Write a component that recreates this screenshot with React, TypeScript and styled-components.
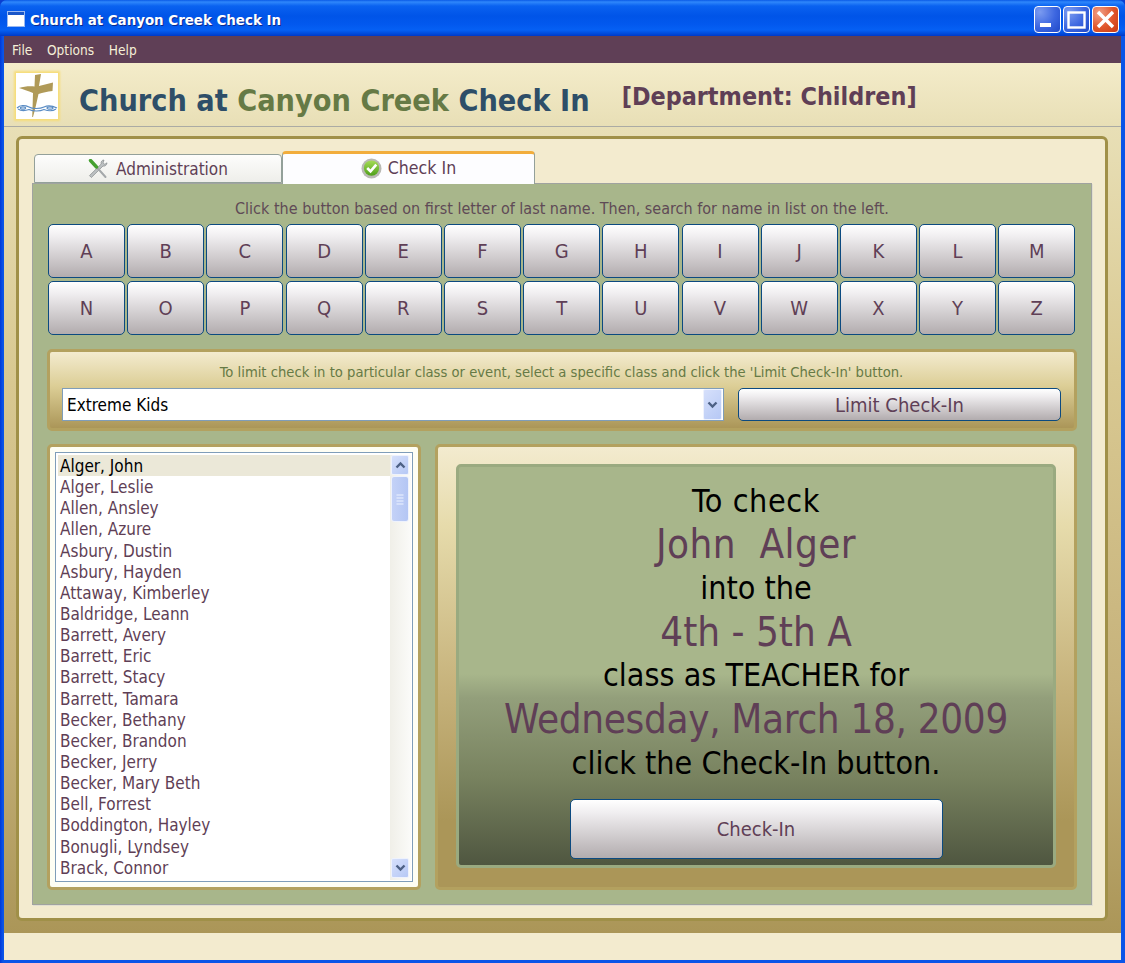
import React from "react";
import styled, { createGlobalStyle } from "styled-components";

const FONT = `"DejaVu Sans Condensed", "DejaVu Sans", "Noto Sans", sans-serif`;

const Global = createGlobalStyle`
  html, body { margin: 0; padding: 0; width: 1125px; height: 963px; overflow: hidden; background: #0a3fd0; }
  * { box-sizing: border-box; }
  #root { width: 1125px; height: 963px; }
`;

const Window = styled.div`
  width: 1125px;
  height: 963px;
  display: flex;
  flex-direction: column;
  font-family: ${FONT};
  background: linear-gradient(90deg, #0038d8 0, #0a55e8 3px);
  border-radius: 7px 7px 0 0;
  overflow: hidden;
`;
const TitleBar = styled.div`
  height: 36px;
  flex: none;
  display: flex;
  align-items: center;
  padding: 2px 6px 0 7px;
  gap: 5px;
  background: linear-gradient(180deg, #0a5ae6 0, #2f87fb 2px, #0a62f0 6px, #0054e8 16px, #0258ee 24px, #0560f4 30px, #0048d8 34px, #0038c8 36px);
`;
const TitleText = styled.span`
  flex: 1;
  margin-top: 2px;
  color: #fff;
  font-size: 14.9px;
  font-weight: 700;
  text-shadow: 1px 1px 0 #0a2a90;
`;
const CaptionButtons = styled.div`
  display: flex;
  gap: 2px;
`;
const CaptionButton = styled.div<{ $close?: boolean }>`
  width: 27px;
  height: 27px;
  border: 1px solid #fff;
  border-radius: 4px;
  background: ${(p) =>
    p.$close
      ? "radial-gradient(circle at 25% 25%, #f0a088, #e0552a 55%, #c93a12)"
      : "radial-gradient(circle at 20% 20%, #7b9bf0, #3c66e0 55%, #1f48c8)"};
  display: flex;
  align-items: center;
  justify-content: center;
`;
const Body = styled.div`
  flex: 1;
  margin: 0 4px 3px;
  display: flex;
  flex-direction: column;
  min-height: 0;
`;
const MenuBar = styled.div`
  height: 27px;
  flex: none;
  background: #5f3f56;
  display: flex;
  align-items: center;
  gap: 14.6px;
  padding-left: 8px;
  color: #f5efd8;
  font-size: 13.6px;
`;
const Header = styled.div`
  height: 64px;
  flex: none;
  display: flex;
  align-items: flex-start;
  background: linear-gradient(180deg, #f4ecca, #e8dfb6);
  border-bottom: 1px solid #ababa4;
  padding: 10px 0 0 12px;
`;
const Logo = styled.div`
  width: 42px;
  height: 46px;
  background: #fff;
  box-shadow: 0 0 2px 2px #f6dd7a;
  flex: none;
  display: flex;
`;
const HeaderTitle = styled.div`
  margin: 10px 0 0 21px;
  font-size: 30.3px;
  font-weight: 700;
  line-height: 36px;
  color: #2e4e68;
  white-space: pre;
`;
const Green = styled.span`
  color: #667a45;
`;
const Department = styled.div`
  margin: 8px 0 0 32px;
  font-size: 24.9px;
  font-weight: 700;
  line-height: 32px;
  color: #5f3f56;
`;
const Content = styled.div`
  flex: 1;
  display: flex;
  flex-direction: column;
  min-height: 0;
  padding: 9px 13px 12px 12px;
  background: linear-gradient(180deg, #e8dfb6 0, #d9c992 30%, #c6b27b 70%, #ab9658 100%);
`;
const Card = styled.div`
  height: 785px;
  flex: none;
  border: 3px solid #a09048;
  border-radius: 6px;
  background: #f3ebcf;
  padding: 14px 13px 13px 13px;
  display: flex;
  flex-direction: column;
`;
const Tabs = styled.div`
  display: flex;
  height: 30px;
  flex: none;
  padding-left: 2px;
  align-items: flex-end;
`;
const Tab = styled.div<{ $active?: boolean }>`
  width: ${(p) => (p.$active ? 253 : 248)}px;
  height: ${(p) => (p.$active ? 33 : 29)}px;
  margin-bottom: ${(p) => (p.$active ? -1 : 0)}px;
  padding-bottom: ${(p) => (p.$active ? 2 : 0)}px;
  position: relative;
  z-index: ${(p) => (p.$active ? 2 : 0)};
  border: 1px solid #93a09a;
  border-bottom: ${(p) => (p.$active ? "none" : "1px solid #93a09a")};
  border-top: ${(p) => (p.$active ? "3px solid #f2ad3c" : "1px solid #93a09a")};
  border-radius: 4px 4px 0 0;
  background: ${(p) => (p.$active ? "#fdfdff" : "linear-gradient(180deg, #fdfdfc, #eeeeea)")};
  display: flex;
  align-items: center;
  justify-content: center;
  gap: ${(p) => (p.$active ? 6 : 8)}px;
  font-size: ${(p) => (p.$active ? 17.6 : 17)}px;
  color: #5f3f56;
`;
const Panel = styled.div`
  flex: 1;
  min-height: 0;
  background: #a8b68b;
  border: 1px solid #a0a3a0;
  box-shadow: 1px 1px 0 #e2dfd0;
  padding: 15px 15px 14px 15px;
  display: flex;
  flex-direction: column;
`;
const Hint = styled.div`
  height: 19px;
  line-height: 19px;
  text-align: center;
  font-size: 16px;
  color: #5f4a56;
  margin-bottom: 6px;
  white-space: nowrap;
`;
const Letters = styled.div`
  display: grid;
  grid-template-columns: repeat(13, 77px);
  grid-auto-rows: 54px;
  column-gap: 2.2px;
  row-gap: 3px;
`;
const Glossy = styled.button`
  font-family: ${FONT};
  color: #5f3f56;
  border: 1px solid #0c4a80;
  border-radius: 5px;
  background: linear-gradient(180deg, #ffffff 0, #f0eef0 22%, #b2acae 100%);
  padding: 0;
`;
const LetterButton = styled(Glossy)`
  font-size: 20px;
`;
const LimitPanel = styled.div`
  height: 82px;
  flex: none;
  margin: 14px -1px 0 -1px;
  border: 3px solid #b3a15f;
  border-radius: 5px;
  background: linear-gradient(180deg, #f3ebcf 0, #dcce96 45%, #ab9658 100%);
  padding: 10px 13px 0 12px;
`;
const LimitHint = styled.div`
  height: 20px;
  line-height: 20px;
  text-align: center;
  font-size: 14.65px;
  color: #667a45;
  margin-bottom: 6px;
  white-space: nowrap;
`;
const LimitRow = styled.div`
  display: flex;
  gap: 14px;
  height: 33px;
`;
const Select = styled.div`
  width: 662px;
  flex: none;
  background: #fff;
  border: 1px solid #7f9db9;
  display: flex;
  align-items: center;
  justify-content: space-between;
  padding: 0 1px 0 4px;
  font-size: 17px;
  color: #000;
`;
const ScrollButton = styled.div<{ $tall?: boolean }>`
  width: ${(p) => (p.$tall ? 19 : 18)}px;
  height: ${(p) => (p.$tall ? "100%" : "20px")};
  flex: none;
  border: 1px solid #eef2fd;
  border-radius: 2px;
  background: linear-gradient(135deg, #d6e0fb, #b6c8f5);
  display: flex;
  align-items: center;
  justify-content: center;
`;
const LimitButton = styled(Glossy)`
  flex: 1;
  font-size: 20px;
`;
const Lower = styled.div`
  flex: none;
  margin: 13px -1px 0 -1px;
  display: flex;
  gap: 14px;
  height: 446px;
`;
const ListCard = styled.div`
  width: 374px;
  flex: none;
  border: 3px solid #b3a15f;
  border-radius: 5px;
  background: #fefef4;
  padding: 5px;
`;
const ListBox = styled.div`
  height: 100%;
  border: 1px solid #7f9db9;
  background: #fff;
  display: flex;
  padding: 2px 1px 1px 2px;
`;
const Names = styled.div`
  flex: 1;
  overflow: hidden;
`;
const Name = styled.div<{ $selected?: boolean }>`
  height: 21.15px;
  line-height: 22px;
  padding-left: 2px;
  font-size: 17px;
  white-space: nowrap;
  color: ${(p) => (p.$selected ? "#000" : "#5f3f56")};
  background: ${(p) => (p.$selected ? "#ebe8d8" : "transparent")};
`;
const ScrollBar = styled.div`
  width: 21px;
  flex: none;
  background: linear-gradient(90deg, #f0efe8, #fbfbf9);
  display: flex;
  flex-direction: column;
  align-items: flex-start;
  gap: 1px;
  padding: 0 0 2px 1px;
`;
const Thumb = styled.div`
  width: 18px;
  height: 46px;
  border: 1px solid #eef2fd;
  border-radius: 3px;
  background: linear-gradient(90deg, #c4d2f7, #b4c6f4);
  display: flex;
  align-items: center;
  justify-content: center;
`;
const Track = styled.div`
  flex: 1;
`;
const MessagePanel = styled.div`
  flex: 1;
  border: 3px solid #b3a15f;
  border-radius: 5px;
  background: linear-gradient(180deg, #f3ebcf 0, #e6dbab 18%, #c6b27b 55%, #ab9658 85%);
  padding: 17px 18px 19px 18px;
`;
const Message = styled.div`
  height: 100%;
  border: 3px solid #9aaa80;
  border-radius: 5px;
  background: linear-gradient(180deg, #a8b68b 0, #a8b68b 52%, #939f7b 58%, #78825f 78%, #4f5640 100%);
  display: flex;
  flex-direction: column;
  align-items: center;
  padding-top: 12.6px;
`;
const Plain = styled.div<{ $track?: number }>`
  height: 43.7px;
  line-height: 43.7px;
  font-size: 32px;
  color: #000;
  white-space: pre;
  letter-spacing: ${(p) => p.$track ?? 0}px;
`;
const Accent = styled.div<{ $track?: number }>`
  height: 43.7px;
  line-height: 43.7px;
  font-size: 40px;
  color: #5f3f56;
  white-space: pre;
  letter-spacing: ${(p) => p.$track ?? 0}px;
`;
const CheckButton = styled(Glossy)`
  width: 373px;
  height: 60px;
  margin-top: 13.4px;
  font-size: 20px;
  flex: none;
`;
const Status = styled.div`
  height: 27px;
  flex: none;
  background: #f3ebcf;
`;

const NAMES = [
  "Alger, John", "Alger, Leslie", "Allen, Ansley", "Allen, Azure", "Asbury, Dustin", "Asbury, Hayden",
  "Attaway, Kimberley", "Baldridge, Leann", "Barrett, Avery", "Barrett, Eric", "Barrett, Stacy",
  "Barrett, Tamara", "Becker, Bethany", "Becker, Brandon", "Becker, Jerry", "Becker, Mary Beth",
  "Bell, Forrest", "Boddington, Hayley", "Bonugli, Lyndsey", "Brack, Connor",
];
const LETTERS = "ABCDEFGHIJKLMNOPQRSTUVWXYZ".split("");

const WindowIcon = () => (
  <svg width="18" height="16" viewBox="0 0 18 16">
    <rect x="0.5" y="0.5" width="17" height="15" fill="#fff" stroke="#9ab8f0" />
    <rect x="1" y="1" width="16" height="3" fill="#1a56c8" />
  </svg>
);
const Chevron = ({ up }: { up?: boolean }) => (
  <svg width="11" height="8" viewBox="0 0 11 8">
    <path d={up ? "M1.5 6.5 L5.5 2.5 L9.5 6.5" : "M1.5 1.5 L5.5 5.5 L9.5 1.5"} fill="none" stroke="#4d6185" strokeWidth="2.4" />
  </svg>
);
const Grip = () => (
  <svg width="8" height="11" viewBox="0 0 8 11">
    {[0.5, 3.5, 6.5, 9.5].map((y) => (
      <rect key={y} x="0.5" y={y} width="7" height="1" fill="#eef3ff" />
    ))}
  </svg>
);
const CrossLogo = () => (
  <svg width="42" height="46" viewBox="0 0 42 46">
    <path d="M19 2 L25 1 C24.5 5 23.5 9 23 13 L37 9.5 L36.5 18 C31 18.5 27 19.5 22.5 21 C21 28 19 37 17 44 L16.2 44 C16.5 36 16.8 28 17 20 C12 18 7 16 3 15 C8 13.5 13 13 18.5 13.5 Z" fill="#b09a58" />
    <g fill="none" stroke="#5a8cc4" strokeWidth="1.2">
      <path d="M1 35 C4 32 9 32 13 34 C16 36 24 36 28 34 C32 32 37 33 41 35" />
      <path d="M2 36 C5 38 9 38 13 36.5 C17 38.5 24 38.5 28 36.5 C32 38 37 38 40 36" />
      <ellipse cx="7" cy="35" rx="2.6" ry="1.2" />
      <ellipse cx="34" cy="35" rx="3" ry="1.2" />
    </g>
  </svg>
);
const ToolsIcon = () => (
  <svg width="20" height="20" viewBox="0 0 20 20">
    <path d="M16 1 C14 1 12.6 2.8 13.2 5 L1.5 16.6 L3.4 18.5 L15 7 C17 7.6 19 6 19 3.8 L16.8 5.3 L15 3.8 Z" fill="#bcc0c2" stroke="#85898b" strokeWidth="0.7" />
    <path d="M9 8.5 L17.5 18" stroke="#a4a8aa" strokeWidth="2" strokeLinecap="round" />
    <path d="M2.5 1.5 L8.5 8" stroke="#45a030" strokeWidth="3.4" strokeLinecap="round" />
  </svg>
);
const CheckIcon = () => (
  <svg width="21" height="21" viewBox="0 0 22 22">
    <defs>
      <linearGradient id="chk" x1="0" y1="0" x2="0" y2="1">
        <stop offset="0" stopColor="#a6dc58" />
        <stop offset="1" stopColor="#4fa01a" />
      </linearGradient>
    </defs>
    <circle cx="11" cy="11" r="10.5" fill="#b9b9b4" />
    <circle cx="11" cy="10.5" r="8" fill="url(#chk)" />
    <path d="M6.5 10.5 L10 14 L16 7" fill="none" stroke="#fff" strokeWidth="2.8" />
  </svg>
);

export default function App() {
  return (
    <Window>
      <Global />
      <TitleBar>
        <WindowIcon />
        <TitleText>Church at Canyon Creek Check In</TitleText>
        <CaptionButtons>
          <CaptionButton>
            <svg width="17" height="17" viewBox="0 0 17 17"><rect x="1" y="12" width="11" height="4" fill="#fff" /></svg>
          </CaptionButton>
          <CaptionButton>
            <svg width="19" height="19" viewBox="0 0 19 19"><rect x="1.5" y="2.5" width="16" height="15" fill="none" stroke="#fff" strokeWidth="2.4" /></svg>
          </CaptionButton>
          <CaptionButton $close>
            <svg width="21" height="21" viewBox="0 0 21 21"><path d="M3 3 L18 18 M18 3 L3 18" stroke="#fff" strokeWidth="3.4" /></svg>
          </CaptionButton>
        </CaptionButtons>
      </TitleBar>
      <Body>
        <MenuBar>
          <span>File</span>
          <span>Options</span>
          <span>Help</span>
        </MenuBar>
        <Header>
          <Logo><CrossLogo /></Logo>
          <HeaderTitle>
            Church at <Green>Canyon Creek</Green> Check In
          </HeaderTitle>
          <Department>[Department: Children]</Department>
        </Header>
        <Content>
          <Card>
            <Tabs>
              <Tab><ToolsIcon />Administration</Tab>
              <Tab $active><CheckIcon />Check In</Tab>
            </Tabs>
            <Panel>
              <Hint>Click the button based on first letter of last name. Then, search for name in list on the left.</Hint>
              <Letters>
                {LETTERS.map((l) => (
                  <LetterButton key={l}>{l}</LetterButton>
                ))}
              </Letters>
              <LimitPanel>
                <LimitHint>To limit check in to particular class or event, select a specific class and click the 'Limit Check-In' button.</LimitHint>
                <LimitRow>
                  <Select>
                    Extreme Kids
                    <ScrollButton $tall><Chevron /></ScrollButton>
                  </Select>
                  <LimitButton>Limit Check-In</LimitButton>
                </LimitRow>
              </LimitPanel>
              <Lower>
                <ListCard>
                  <ListBox>
                    <Names>
                      {NAMES.map((n, i) => (
                        <Name key={n} $selected={i === 0}>{n}</Name>
                      ))}
                    </Names>
                    <ScrollBar>
                      <ScrollButton><Chevron up /></ScrollButton>
                      <Thumb><Grip /></Thumb>
                      <Track />
                      <ScrollButton><Chevron /></ScrollButton>
                    </ScrollBar>
                  </ListBox>
                </ListCard>
                <MessagePanel>
                  <Message>
                    <Plain $track={0.6}>To check</Plain>
                    <Accent $track={0.4}>John  Alger</Accent>
                    <Plain>into the</Plain>
                    <Accent>4th - 5th A</Accent>
                    <Plain>class as TEACHER for</Plain>
                    <Accent $track={-0.33}>Wednesday, March 18, 2009</Accent>
                    <Plain>click the Check-In button.</Plain>
                    <CheckButton>Check-In</CheckButton>
                  </Message>
                </MessagePanel>
              </Lower>
            </Panel>
          </Card>
        </Content>
        <Status />
      </Body>
    </Window>
  );
}
